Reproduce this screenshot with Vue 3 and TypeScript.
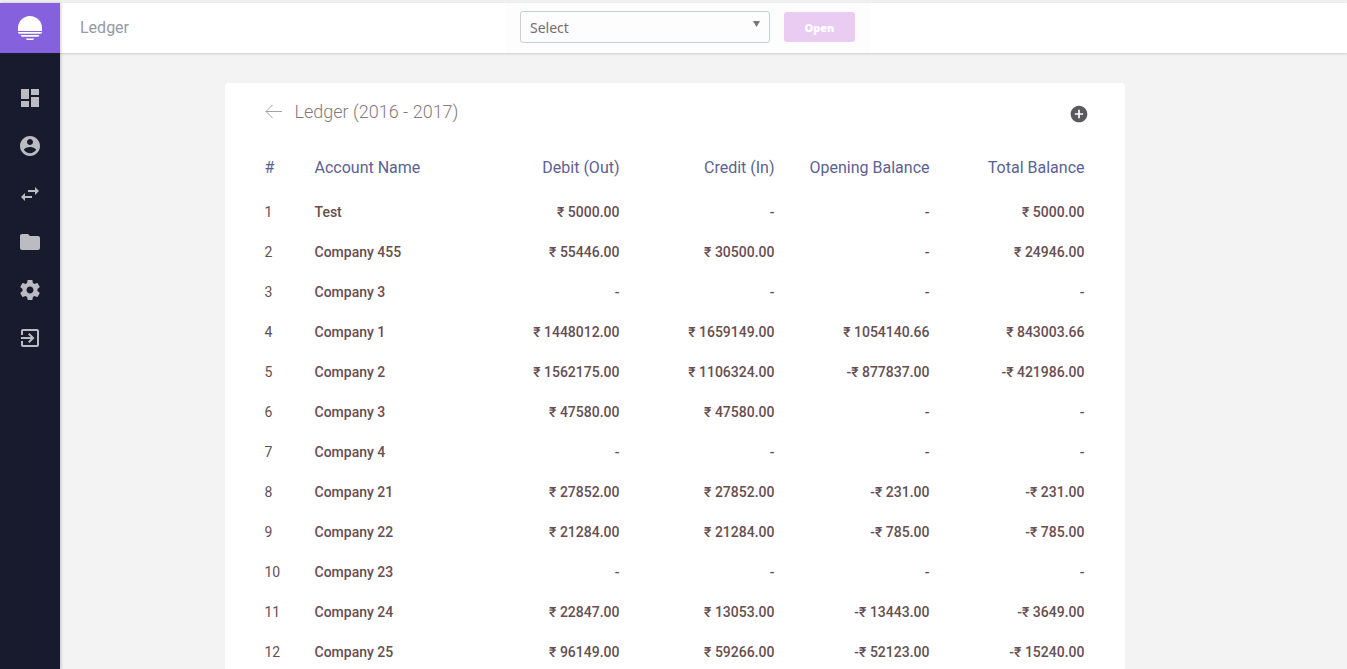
<script setup lang="ts">
import { ref } from 'vue'

interface NavItem {
  label: string
  path: string
}

interface Account {
  name: string
  debit: string
  credit: string
  opening: string
  total: string
}

const navItems: NavItem[] = [
  { label: 'Dashboard', path: 'M3 13h8V3H3v10zm0 8h8v-6H3v6zm10 0h8V11h-8v10zm0-18v6h8V3h-8z' },
  {
    label: 'Accounts',
    path: 'M12 2C6.48 2 2 6.48 2 12s4.48 10 10 10 10-4.48 10-10S17.52 2 12 2zm0 3c1.66 0 3 1.34 3 3s-1.34 3-3 3-3-1.34-3-3 1.34-3 3-3zm0 14.2c-2.5 0-4.71-1.28-6-3.22.03-1.99 4-3.08 6-3.08 1.99 0 5.97 1.09 6 3.08-1.29 1.94-3.5 3.22-6 3.22z',
  },
  { label: 'Transactions', path: 'M6.99 11L3 15l3.99 4v-3H14v-2H6.99v-3zM21 9l-3.99-4v3H10v2h7.01v3L21 9z' },
  { label: 'Files', path: 'M10 4H4c-1.1 0-1.99.9-1.99 2L2 18c0 1.1.9 2 2 2h16c1.1 0 2-.9 2-2V8c0-1.1-.9-2-2-2h-8l-2-2z' },
  {
    label: 'Settings',
    path: 'M19.43 12.98c.04-.32.07-.64.07-.98s-.03-.66-.07-.98l2.11-1.65c.19-.15.24-.42.12-.64l-2-3.46c-.12-.22-.39-.3-.61-.22l-2.49 1c-.52-.4-1.08-.73-1.69-.98l-.38-2.65C14.46 2.18 14.25 2 14 2h-4c-.25 0-.46.18-.49.42l-.38 2.65c-.61.25-1.17.59-1.69.98l-2.49-1c-.23-.09-.49 0-.61.22l-2 3.46c-.13.22-.07.49.12.64l2.11 1.65c-.04.32-.07.65-.07.98s.03.66.07.98l-2.11 1.65c-.19.15-.24.42-.12.64l2 3.46c.12.22.39.3.61.22l2.49-1c.52.4 1.08.73 1.69.98l.38 2.65c.03.24.24.42.49.42h4c.25 0 .46-.18.49-.42l.38-2.65c.61-.25 1.17-.59 1.69-.98l2.49 1c.23.09.49 0 .61-.22l2-3.46c.12-.22.07-.49-.12-.64l-2.11-1.65zM12 15.5c-1.93 0-3.5-1.57-3.5-3.5s1.57-3.5 3.5-3.5 3.5 1.57 3.5 3.5-1.57 3.5-3.5 3.5z',
  },
  {
    label: 'Sign out',
    path: 'M10.09 15.59L11.5 17l5-5-5-5-1.41 1.41L12.67 11H3v2h9.67l-2.58 2.59zM19 3H5c-1.11 0-2 .9-2 2v4h2V5h14v14H5v-4H3v4c0 1.1.89 2 2 2h14c1.1 0 2-.9 2-2V5c0-1.1-.9-2-2-2z',
  },
]

const accounts: Account[] = [
  { name: 'Test', debit: '₹ 5000.00', credit: '-', opening: '-', total: '₹ 5000.00' },
  { name: 'Company 455', debit: '₹ 55446.00', credit: '₹ 30500.00', opening: '-', total: '₹ 24946.00' },
  { name: 'Company 3', debit: '-', credit: '-', opening: '-', total: '-' },
  { name: 'Company 1', debit: '₹ 1448012.00', credit: '₹ 1659149.00', opening: '₹ 1054140.66', total: '₹ 843003.66' },
  { name: 'Company 2', debit: '₹ 1562175.00', credit: '₹ 1106324.00', opening: '-₹ 877837.00', total: '-₹ 421986.00' },
  { name: 'Company 3', debit: '₹ 47580.00', credit: '₹ 47580.00', opening: '-', total: '-' },
  { name: 'Company 4', debit: '-', credit: '-', opening: '-', total: '-' },
  { name: 'Company 21', debit: '₹ 27852.00', credit: '₹ 27852.00', opening: '-₹ 231.00', total: '-₹ 231.00' },
  { name: 'Company 22', debit: '₹ 21284.00', credit: '₹ 21284.00', opening: '-₹ 785.00', total: '-₹ 785.00' },
  { name: 'Company 23', debit: '-', credit: '-', opening: '-', total: '-' },
  { name: 'Company 24', debit: '₹ 22847.00', credit: '₹ 13053.00', opening: '-₹ 13443.00', total: '-₹ 3649.00' },
  { name: 'Company 25', debit: '₹ 96149.00', credit: '₹ 59266.00', opening: '-₹ 52123.00', total: '-₹ 15240.00' },
]

const selected = ref('')
</script>

<template>
  <div class="shell">
    <aside class="sidebar">
      <a href="#" class="logo" aria-label="Home">
        <svg width="24" height="24" viewBox="0 0 24 24" aria-hidden="true">
          <path d="M0 15V12a12 12 0 0 1 24 0v3zM0 16h24l-.6 1.7H.6zM2.5 19h19l-1.2 1.8H3.7zM7.6 22.4h8.8L15 24H9z" />
        </svg>
      </a>
      <nav class="nav" aria-label="Main">
        <a v-for="item in navItems" :key="item.label" href="#" class="nav-link" :aria-label="item.label">
          <svg width="24" height="24" viewBox="0 0 24 24" aria-hidden="true"><path :d="item.path" /></svg>
        </a>
      </nav>
    </aside>

    <div class="page">
      <header class="topbar">
        <span class="section">Ledger</span>
        <form class="tools" @submit.prevent>
          <div class="picker">
            <select v-model="selected" class="select" aria-label="Select">
              <option value="">Select</option>
              <option v-for="(account, i) in accounts" :key="i" :value="String(i)">{{ account.name }}</option>
            </select>
            <svg class="caret" width="7" height="6" viewBox="0 0 7 6" aria-hidden="true"><path d="M0 0h7L3.5 6z" /></svg>
          </div>
          <button type="submit" class="open" :disabled="selected === ''">Open</button>
        </form>
      </header>

      <main class="content">
        <section class="card">
          <div class="card-head">
            <a href="#" class="back" aria-label="Back">
              <svg width="18" height="14" viewBox="0 0 18 14" aria-hidden="true"><path d="M17 7.5H1M7.5 1l-6.5 6.5L7.5 14" /></svg>
            </a>
            <h1 class="title">Ledger (2016 - 2017)</h1>
            <button type="button" class="add" aria-label="Add account">
              <svg width="20" height="20" viewBox="0 0 24 24" aria-hidden="true">
                <path d="M12 2C6.48 2 2 6.48 2 12s4.48 10 10 10 10-4.48 10-10S17.52 2 12 2zm5 11h-4v4h-2v-4H7v-2h4V7h2v4h4v2z" />
              </svg>
            </button>
          </div>

          <table class="ledger">
            <thead>
              <tr>
                <th scope="col" class="index">#</th>
                <th scope="col">Account Name</th>
                <th scope="col" class="amount">Debit (Out)</th>
                <th scope="col" class="amount">Credit (In)</th>
                <th scope="col" class="amount">Opening Balance</th>
                <th scope="col" class="amount">Total Balance</th>
              </tr>
            </thead>
            <tbody>
              <tr v-for="(account, i) in accounts" :key="i">
                <td class="index">{{ i + 1 }}</td>
                <td>{{ account.name }}</td>
                <td class="amount">{{ account.debit }}</td>
                <td class="amount">{{ account.credit }}</td>
                <td class="amount">{{ account.opening }}</td>
                <td class="amount">{{ account.total }}</td>
              </tr>
            </tbody>
          </table>
        </section>
      </main>
    </div>
  </div>
</template>

<style>
body {
  margin: 0;
  background: #f3f3f3;
}
</style>

<style scoped>
* {
  box-sizing: border-box;
}

.shell {
  display: flex;
  height: 100vh;
  border-top: 3px solid #b5b5b8;
  border-image: linear-gradient(#f0f0f0 0 67%, #b0afb2 67%) 3;
  font-family: Roboto, "Liberation Sans", sans-serif;
  color: #674e50;
}

.sidebar {
  z-index: 1;
  flex: 0 0 60px;
  background: #181b2e;
  box-shadow: 1px 0 3px rgba(0, 0, 0, 0.2);
}

.logo {
  display: flex;
  align-items: center;
  justify-content: center;
  height: 50px;
  background: #8561de;
}

.logo svg {
  fill: #fff;
}

.nav {
  display: flex;
  flex-direction: column;
  padding-top: 21px;
}

.nav-link {
  display: flex;
  align-items: center;
  justify-content: center;
  height: 48px;
}

.nav-link svg {
  fill: #bbbcc2;
}

.page {
  display: flex;
  flex: 1;
  flex-direction: column;
  min-width: 0;
}

.topbar {
  display: grid;
  flex: 0 0 50px;
  grid-template-columns: 1fr auto 1fr;
  align-items: center;
  padding-right: 31px;
  background: #fff;
  box-shadow: 0 1px 2px rgba(0, 0, 0, 0.16);
}

.section {
  padding: 0 0 2px 20px;
  font-size: 16px;
  color: #9499a8;
}

.tools {
  display: flex;
  align-items: center;
  gap: 14px;
  height: 50px;
  padding: 0 15px 2px 14px;
  background: #fdfdfd;
}

.picker {
  position: relative;
}

.select {
  display: block;
  width: 250px;
  height: 32px;
  padding: 0 9px;
  border: 1px solid #c3d0d8;
  border-radius: 3px;
  appearance: none;
  background: #fdfdfd;
  font-family: "Noto Sans", sans-serif;
  font-size: 14px;
  color: #756d72;
}

.caret {
  position: absolute;
  top: 10px;
  right: 10px;
  fill: #77777a;
  pointer-events: none;
}

.open {
  width: 71px;
  height: 30px;
  padding: 0;
  border: 0;
  border-radius: 3px;
  background: #eacbf2;
  font-family: "Open Sans", sans-serif;
  font-size: 11px;
  font-weight: 800;
  color: #fff;
}

.content {
  flex: 1;
  min-height: 0;
  padding: 30px 58px 0 0;
  overflow-y: auto;
  scrollbar-width: none;
}

.card {
  max-width: 900px;
  margin: 0 auto;
  padding: 10px 40px 30px;
  border-radius: 4px;
  background: #fff;
}

.card-head {
  display: flex;
  align-items: center;
  height: 36px;
}

.back {
  display: flex;
  width: 30px;
}

.back svg {
  fill: none;
  stroke: #a5a0a5;
}

.title {
  flex: 1;
  margin: 0;
  font-size: 18px;
  font-weight: 300;
  color: #857882;
}

.add {
  display: flex;
  margin: 5px -4px 0 0;
  padding: 0;
  border: 0;
  background: none;
}

.add svg {
  fill: #5a5a5c;
}

.ledger {
  width: 100%;
  margin-top: 19px;
  border-collapse: collapse;
  table-layout: fixed;
}

th,
td {
  height: 40px;
  padding: 0;
  text-align: left;
  white-space: nowrap;
}

th {
  height: 44px;
  padding-bottom: 5px;
  font-size: 16px;
  font-weight: 400;
  color: #5c6194;
}

td {
  font-size: 14px;
  font-weight: 500;
}

.index {
  width: 50px;
  font-weight: 400;
}

.ledger .amount {
  width: 155px;
  text-align: right;
}
</style>
